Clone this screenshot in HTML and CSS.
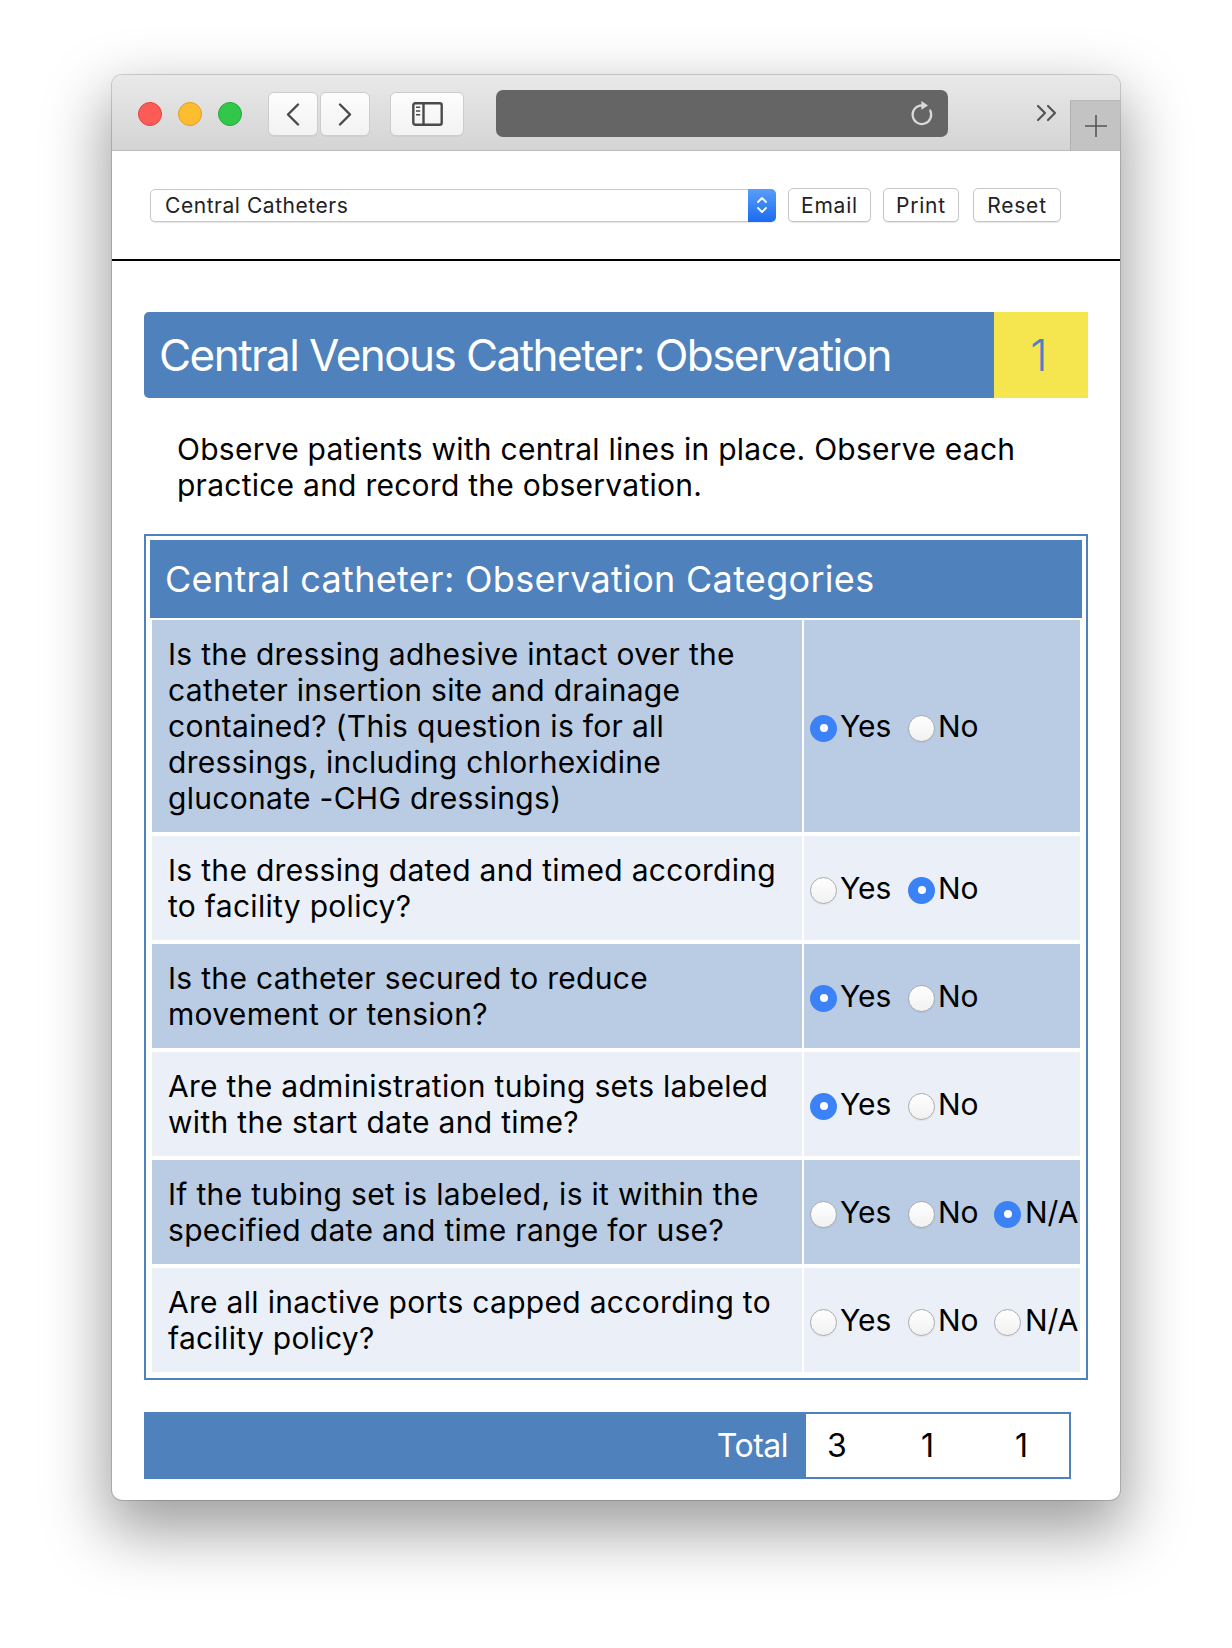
FILE: index.html
```html
<!DOCTYPE html>
<html lang="en">
<head>
<meta charset="utf-8">
<title>Central Catheters</title>
<link rel="stylesheet" href="styles.css">
</head>
<body>
<div class="stage">
  <div class="window">
    <div class="titlebar">
      <div class="lights">
        <span class="light red"></span>
        <span class="light yellow"></span>
        <span class="light green"></span>
      </div>
      <div class="navgroup">
        <span class="tbtn nav">
          <svg width="14" height="23" viewBox="0 0 14 23"><path d="M12 1.5 L2 11.5 L12 21.5" fill="none" stroke="#4a4a4a" stroke-width="2.4" stroke-linecap="round" stroke-linejoin="round"/></svg>
        </span>
        <span class="tbtn nav">
          <svg width="14" height="23" viewBox="0 0 14 23"><path d="M2 1.5 L12 11.5 L2 21.5" fill="none" stroke="#4a4a4a" stroke-width="2.4" stroke-linecap="round" stroke-linejoin="round"/></svg>
        </span>
      </div>
      <span class="tbtn sidebar">
        <svg width="31" height="24" viewBox="0 0 31 24"><rect x="1.3" y="1.3" width="28.4" height="21.4" rx="2" fill="none" stroke="#4a4a4a" stroke-width="2.4"/><line x1="11.5" y1="1.5" x2="11.5" y2="22.5" stroke="#4a4a4a" stroke-width="2.4"/><line x1="4" y1="5.2" x2="8.2" y2="5.2" stroke="#4a4a4a" stroke-width="1.6"/><line x1="4" y1="9" x2="8.2" y2="9" stroke="#4a4a4a" stroke-width="1.6"/><line x1="4" y1="12.8" x2="8.2" y2="12.8" stroke="#4a4a4a" stroke-width="1.6"/></svg>
      </span>
      <div class="address">
        <svg width="26" height="28" viewBox="0 0 26 28"><path d="M21.2 10.5 A9.3 9.3 0 1 1 13 5.4" fill="none" stroke="#d9d9d9" stroke-width="2.2" stroke-linecap="round"/><path d="M12.4 1 L19 5.4 L12.4 9.8 Z" fill="#d9d9d9"/></svg>
      </div>
      <span class="more">
        <svg width="22" height="18" viewBox="0 0 22 18"><path d="M2 2 L9 9 L2 16 M12 2 L19 9 L12 16" fill="none" stroke="#555" stroke-width="2.2" stroke-linecap="round" stroke-linejoin="round"/></svg>
      </span>
      <span class="newtab">
        <svg width="22" height="22" viewBox="0 0 22 22"><path d="M11 0 V22 M0 11 H22" stroke="#555" stroke-width="1.6"/></svg>
      </span>
    </div>

    <div class="content">
      <div class="controls">
        <div class="select">
          <span class="select-text">Central Catheters</span>
          <span class="stepper">
            <svg width="12" height="22" viewBox="0 0 12 22"><path d="M2 8 L6 4 L10 8 M2 14 L6 18 L10 14" fill="none" stroke="#fff" stroke-width="1.8" stroke-linecap="round" stroke-linejoin="round"/></svg>
          </span>
        </div>
        <button class="btn btn-email">Email</button>
        <button class="btn btn-print">Print</button>
        <button class="btn btn-reset">Reset</button>
      </div>

      <main class="page">
        <div class="titlebox">
          <h1 class="title">Central Venous Catheter: Observation</h1>
          <div class="badge">1</div>
        </div>

        <p class="desc">Observe patients with central lines in place. Observe each practice and record the observation.</p>

        <section class="panel">
          <h2 class="panel-head">Central catheter: Observation Categories</h2>
          <div class="rows">
            <div class="row dk">
              <div class="q">Is the dressing adhesive intact over the catheter insertion site and drainage contained? (This question is for all dressings, including chlorhexidine gluconate -CHG dressings)</div>
              <div class="a">
                <span class="opt o-yes"><span class="radio on"></span>Yes</span>
                <span class="opt o-no"><span class="radio"></span>No</span>
              </div>
            </div>
            <div class="row lt">
              <div class="q">Is the dressing dated and timed according to facility policy?</div>
              <div class="a">
                <span class="opt o-yes"><span class="radio"></span>Yes</span>
                <span class="opt o-no"><span class="radio on"></span>No</span>
              </div>
            </div>
            <div class="row dk">
              <div class="q">Is the catheter secured to reduce movement or tension?</div>
              <div class="a">
                <span class="opt o-yes"><span class="radio on"></span>Yes</span>
                <span class="opt o-no"><span class="radio"></span>No</span>
              </div>
            </div>
            <div class="row lt">
              <div class="q">Are the administration tubing sets labeled with the start date and time?</div>
              <div class="a">
                <span class="opt o-yes"><span class="radio on"></span>Yes</span>
                <span class="opt o-no"><span class="radio"></span>No</span>
              </div>
            </div>
            <div class="row dk">
              <div class="q">If the tubing set is labeled, is it within the specified date and time range for use?</div>
              <div class="a">
                <span class="opt o-yes"><span class="radio"></span>Yes</span>
                <span class="opt o-no"><span class="radio"></span>No</span>
                <span class="opt o-na"><span class="radio on"></span>N/A</span>
              </div>
            </div>
            <div class="row lt">
              <div class="q">Are all inactive ports capped according to facility policy?</div>
              <div class="a">
                <span class="opt o-yes"><span class="radio"></span>Yes</span>
                <span class="opt o-no"><span class="radio"></span>No</span>
                <span class="opt o-na"><span class="radio"></span>N/A</span>
              </div>
            </div>
          </div>
        </section>

        <div class="total">
          <span class="total-label">Total</span>
          <div class="total-vals"><span>3</span><span>1</span><span>1</span></div>
        </div>
      </main>
    </div>
  </div>
</div>
</body>
</html>
```

FILE: styles.css
```css
* { box-sizing: border-box; }
html, body { margin: 0; padding: 0; background: #fff; }
body {
  width: 1232px;
  height: 1648px;
  overflow: hidden;
  font-family: Inter, "Noto Sans", sans-serif;
  color: #000;
}
.stage { padding: 75px 0 0 112px; }
.window {
  width: 1008px;
  height: 1425px;
  border-radius: 10px;
  background: #fff;
  overflow: hidden;
  box-shadow: 0 0 0 1px rgba(0,0,0,0.16), 0 26px 62px 6px rgba(0,0,0,0.38);
  display: flex;
  flex-direction: column;
}

/* ---------- title bar ---------- */
.titlebar {
  height: 76px;
  flex: none;
  display: flex;
  align-items: flex-start;
  padding-left: 26px;
  background: linear-gradient(#e9e9e9, #d4d4d4);
  border-bottom: 1px solid #bcbcbc;
}
.lights { display: flex; gap: 16px; margin-top: 27px; }
.light { width: 24px; height: 24px; border-radius: 50%; }
.red { background: #fd5b55; border: 1px solid #e1443f; }
.yellow { background: #febc2f; border: 1px solid #df9f22; }
.green { background: #32c74a; border: 1px solid #22a93a; }
.navgroup { display: flex; gap: 2px; margin: 17px 0 0 26px; }
.tbtn {
  height: 44px;
  display: flex;
  align-items: center;
  justify-content: center;
  background: linear-gradient(#fdfdfd, #f2f2f2);
  border: 1px solid #cdcdcd;
  border-radius: 6px;
  box-shadow: 0 1px 0 rgba(0,0,0,0.04);
}
.nav { width: 50px; }
.sidebar { width: 74px; margin: 17px 0 0 20px; }
.address {
  width: 452px;
  height: 47px;
  margin: 15px 0 0 32px;
  background: #656565;
  border-radius: 7px;
  display: flex;
  align-items: center;
  justify-content: flex-end;
  padding-right: 13px;
}
.more { margin: 29px 0 0 88px; display: flex; }
.newtab {
  margin-left: auto;
  margin-top: 25px;
  width: 50px;
  height: 50px;
  background: #c3c3c3;
  border-left: 1px solid #b0b0b0;
  border-top: 1px solid #b8b8b8;
  display: flex;
  align-items: center;
  justify-content: center;
}

/* ---------- controls ---------- */
.content { flex: 1; display: flex; flex-direction: column; }
.controls {
  display: flex;
  align-items: center;
  gap: 12px;
  padding: 37px 0 37px 38px;
  border-bottom: 2px solid #000;
}
.select {
  width: 626px;
  height: 33px;
  display: flex;
  align-items: center;
  background: #fff;
  border: 1px solid #c8c8c8;
  border-radius: 5px;
  box-shadow: 0 1px 1px rgba(0,0,0,0.1);
  padding-left: 14px;
  font-size: 21px;
  letter-spacing: 0.55px;
  color: #222;
}
.select-text { flex: 1; }
.stepper {
  width: 28px;
  height: 33px;
  margin: -1px -1px -1px 0;
  border-radius: 0 5px 5px 0;
  background: linear-gradient(#5a9ef9, #1a6bf1);
  display: flex;
  align-items: center;
  justify-content: center;
}
.btn {
  height: 34px;
  padding: 0;
  font-family: inherit;
  font-size: 21px;
  letter-spacing: 0.8px;
  color: #222;
  background: #fff;
  border: 1px solid #c6c6c6;
  border-radius: 5px;
  box-shadow: 0 1px 1px rgba(0,0,0,0.1);
}
.btn-email { width: 83px; }
.btn-print { width: 76px; }
.btn-reset { width: 88px; margin-left: 2px; }

/* ---------- page ---------- */
.page { padding: 51px 32px 0 32px; }
.titlebox {
  display: flex;
  height: 86px;
  border-radius: 5px 0 0 5px;
  overflow: hidden;
}
.title {
  flex: 1;
  margin: 0;
  display: flex;
  align-items: center;
  padding-left: 15px;
  background: #4f81bd;
  color: #fff;
  font-size: 44px;
  font-weight: 400;
  letter-spacing: -1.55px;
}
.badge {
  width: 94px;
  display: flex;
  align-items: center;
  justify-content: center;
  padding-right: 4px;
  background: #f5e64f;
  color: #4f81bd;
  font-size: 44px;
  font-weight: 300;
}
.desc {
  margin: 33px 0 31px;
  padding: 0 32px 0 33px;
  font-size: 30px;
  line-height: 36px;
  letter-spacing: 0.25px;
}

.panel {
  border: 2px solid #4f81bd;
  padding: 4px;
}
.panel-head {
  margin: 0;
  height: 78px;
  display: flex;
  align-items: center;
  padding-left: 15px;
  background: #4f81bd;
  color: #fff;
  font-size: 36px;
  font-weight: 400;
  letter-spacing: 0.3px;
}
.rows {
  padding: 2px;
  display: flex;
  flex-direction: column;
  gap: 4px;
}
.row {
  display: grid;
  grid-template-columns: 650px 276px;
  column-gap: 2px;
}
.row.dk > div { background: #b9cce4; }
.row.lt > div { background: #ebf0f8; }
.q {
  padding: 16px;
  font-size: 30px;
  line-height: 36px;
  letter-spacing: 0.3px;
}
.a {
  display: flex;
  align-items: center;
  padding-left: 6px;
  font-size: 30px;
  line-height: 36px;
}
.opt { display: flex; align-items: center; gap: 4px; flex: none; }
.o-yes { width: 98px; gap: 3px; }
.o-no { width: 86px; gap: 3px; }
.radio {
  width: 27px;
  height: 27px;
  margin-top: 4px;
  border-radius: 50%;
  background: linear-gradient(#ffffff, #f1f1f1);
  border: 1px solid #acacac;
  box-shadow: 0 1px 1px rgba(0,0,0,0.06);
  display: flex;
  align-items: center;
  justify-content: center;
  flex: none;
}
.radio.on {
  background: #3b82f6;
  border: none;
  box-shadow: none;
}
.radio.on::after {
  content: "";
  width: 8px;
  height: 8px;
  border-radius: 50%;
  background: #fff;
}

/* ---------- total ---------- */
.total {
  margin-top: 32px;
  width: 927px;
  height: 67px;
  display: flex;
  background: #4f81bd;
}
.total-label {
  flex: 1;
  display: flex;
  align-items: center;
  justify-content: flex-end;
  padding-right: 16px;
  color: #fff;
  font-size: 32px;
  letter-spacing: -0.5px;
}
.total-vals {
  width: 267px;
  flex: none;
  display: flex;
  align-items: center;
  padding-left: 21px;
  background: #fff;
  border: 2px solid #4f81bd;
  font-size: 32px;
}
.total-vals span { width: 94px; flex: none; }
.total-vals span:last-child { width: auto; }
```
